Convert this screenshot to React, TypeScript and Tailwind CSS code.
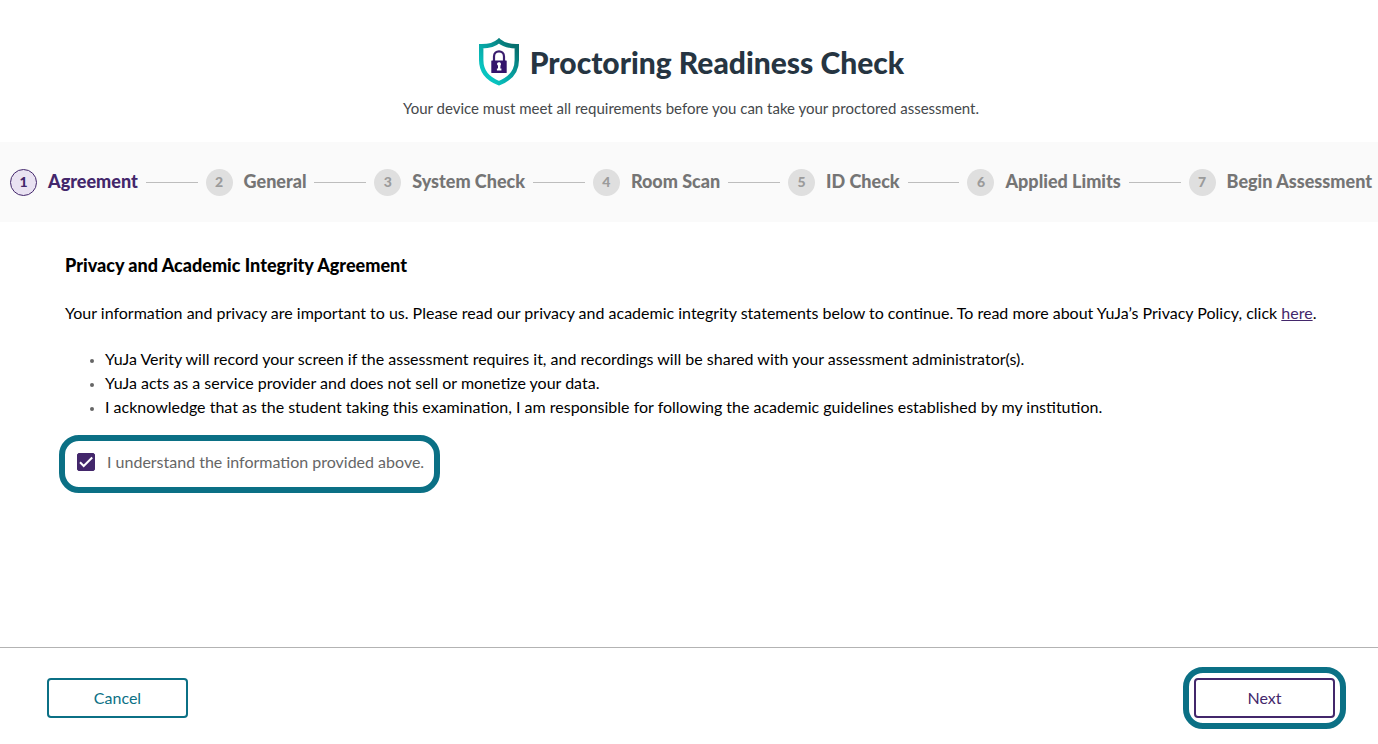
import { Fragment, useState } from "react";

const steps = [
  "Agreement",
  "General",
  "System Check",
  "Room Scan",
  "ID Check",
  "Applied Limits",
  "Begin Assessment",
];

const statements = [
  "YuJa Verity will record your screen if the assessment requires it, and recordings will be shared with your assessment administrator(s).",
  "YuJa acts as a service provider and does not sell or monetize your data.",
  "I acknowledge that as the student taking this examination, I am responsible for following the academic guidelines established by my institution.",
];

function ShieldLogo() {
  return (
    <svg className="h-12 w-[42px] shrink-0" viewBox="0 0 42 48" aria-hidden="true">
      <defs>
        <linearGradient id="shield" x1="0" y1="1" x2="1" y2="0">
          <stop offset="0.2" stopColor="#08c4c0" />
          <stop offset="0.55" stopColor="#079c9c" />
          <stop offset="0.9" stopColor="#06706f" />
        </linearGradient>
      </defs>
      <path
        d="M21 2.8C17 6.3 10 8.3 3.2 8.2V22C3.2 33.5 10.5 41.2 21 45.2C31.5 41.2 38.8 33.5 38.8 22V8.2C32 8.3 25 6.3 21 2.8Z"
        fill="#fff"
        stroke="url(#shield)"
        strokeWidth="4.4"
      />
      <path
        d="M16 24V18.4C16 11.8 26 11.8 26 18.4V24"
        fill="none"
        stroke="#3a1d6e"
        strokeWidth="2.2"
      />
      <rect x="13.3" y="22.4" width="15.4" height="12.6" rx="0.6" fill="#33146b" />
      <path d="M19 26.200a2 2 0 1 1 3.500 1.300L22.300 30.600H23.400V32.400H18.900V30.600H20V27.800Z" fill="#fff" />
    </svg>
  );
}

export default function App() {
  const [agreed, setAgreed] = useState(true);

  return (
    <div className="flex min-h-screen flex-col bg-white font-['Lato','Open_Sans',sans-serif] text-base text-black">
      <header className="flex flex-col items-center pt-9 pb-[23px] pl-1">
        <div className="flex items-center gap-2.5">
          <ShieldLogo />
          <h1 className="text-[30px] leading-[52px] font-black text-[#263542]">Proctoring Readiness Check</h1>
        </div>
        <p className="mt-[9px] text-[15px] leading-[22px] text-[#45484b]">
          Your device must meet all requirements before you can take your proctored assessment.
        </p>
      </header>

      <nav aria-label="Progress" className="bg-[#fafafa] pr-1.5 pl-2.5">
        <ol className="flex h-20 items-center gap-2">
          {steps.map((step, i) => (
            <Fragment key={step}>
              {i > 0 && <li aria-hidden="true" className="h-px flex-1 bg-[#bdbdbd]" />}
              <li className="flex items-center gap-[11px]" aria-current={i === 0 ? "step" : undefined}>
                <span
                  className={
                    i === 0
                      ? "flex size-[27px] items-center justify-center rounded-full border border-[#43276b] bg-[#e9e2f2] text-sm font-black text-[#43276b]"
                      : "flex size-[27px] items-center justify-center rounded-full bg-[#dfdfdf] text-sm font-black text-[#9b9b9b]"
                  }
                >
                  {i + 1}
                </span>
                <span
                  className={
                    i === 0
                      ? "pb-0.5 text-lg font-black whitespace-nowrap text-[#43276b]"
                      : "pb-0.5 text-lg font-black whitespace-nowrap text-[#757575]"
                  }
                >
                  {step}
                </span>
              </li>
            </Fragment>
          ))}
        </ol>
      </nav>

      <main className="flex-1 pt-[31px] pr-10 pl-[65px]">
        <h2 className="text-lg leading-6 font-black">Privacy and Academic Integrity Agreement</h2>
        <p className="mt-6 leading-6">
          Your information and privacy are important to us. Please read our privacy and academic integrity statements
          below to continue. To read more about YuJa’s Privacy Policy, click{" "}
          <a href="#privacy" className="text-[#43276b] underline">
            here
          </a>
          .
        </p>
        <ul className="mt-[22px] list-disc pl-10 leading-6 marker:text-xs marker:text-[#666]">
          {statements.map((statement) => (
            <li key={statement}>{statement}</li>
          ))}
        </ul>
        <label className="mt-4 -ml-1.5 flex h-[58px] w-[381px] items-center gap-3 rounded-[20px] border-6 border-[#0b7085] pb-1 pl-3 whitespace-nowrap text-[#666]">
          <span className="relative flex size-[18px] shrink-0">
            <input
              type="checkbox"
              checked={agreed}
              onChange={(e) => setAgreed(e.target.checked)}
              className="peer size-[18px] appearance-none rounded-xs border border-[#43276b] checked:bg-[#43276b]"
            />
            <svg
              className="pointer-events-none absolute inset-0 hidden size-[18px] peer-checked:block"
              viewBox="0 0 18 18"
              fill="none"
              stroke="#fff"
              strokeWidth="2"
              aria-hidden="true"
            >
              <path d="M3 9.3L6.7 13L15.2 4.5" />
            </svg>
          </span>
          I understand the information provided above.
        </label>
      </main>

      <footer className="flex h-[97px] items-center justify-between border-t border-[#b3b3b3] pt-1 pr-8 pl-[47px]">
        <button type="button" className="h-10 w-[141px] rounded-sm border-2 border-[#0b7085] text-[#0b7085]">
          Cancel
        </button>
        <div className="rounded-[20px] border-6 border-[#0b7085] p-[5px]">
          <button type="button" className="block h-10 w-[141px] rounded-sm border-2 border-[#43276b] text-[#43276b]">
            Next
          </button>
        </div>
      </footer>
    </div>
  );
}
